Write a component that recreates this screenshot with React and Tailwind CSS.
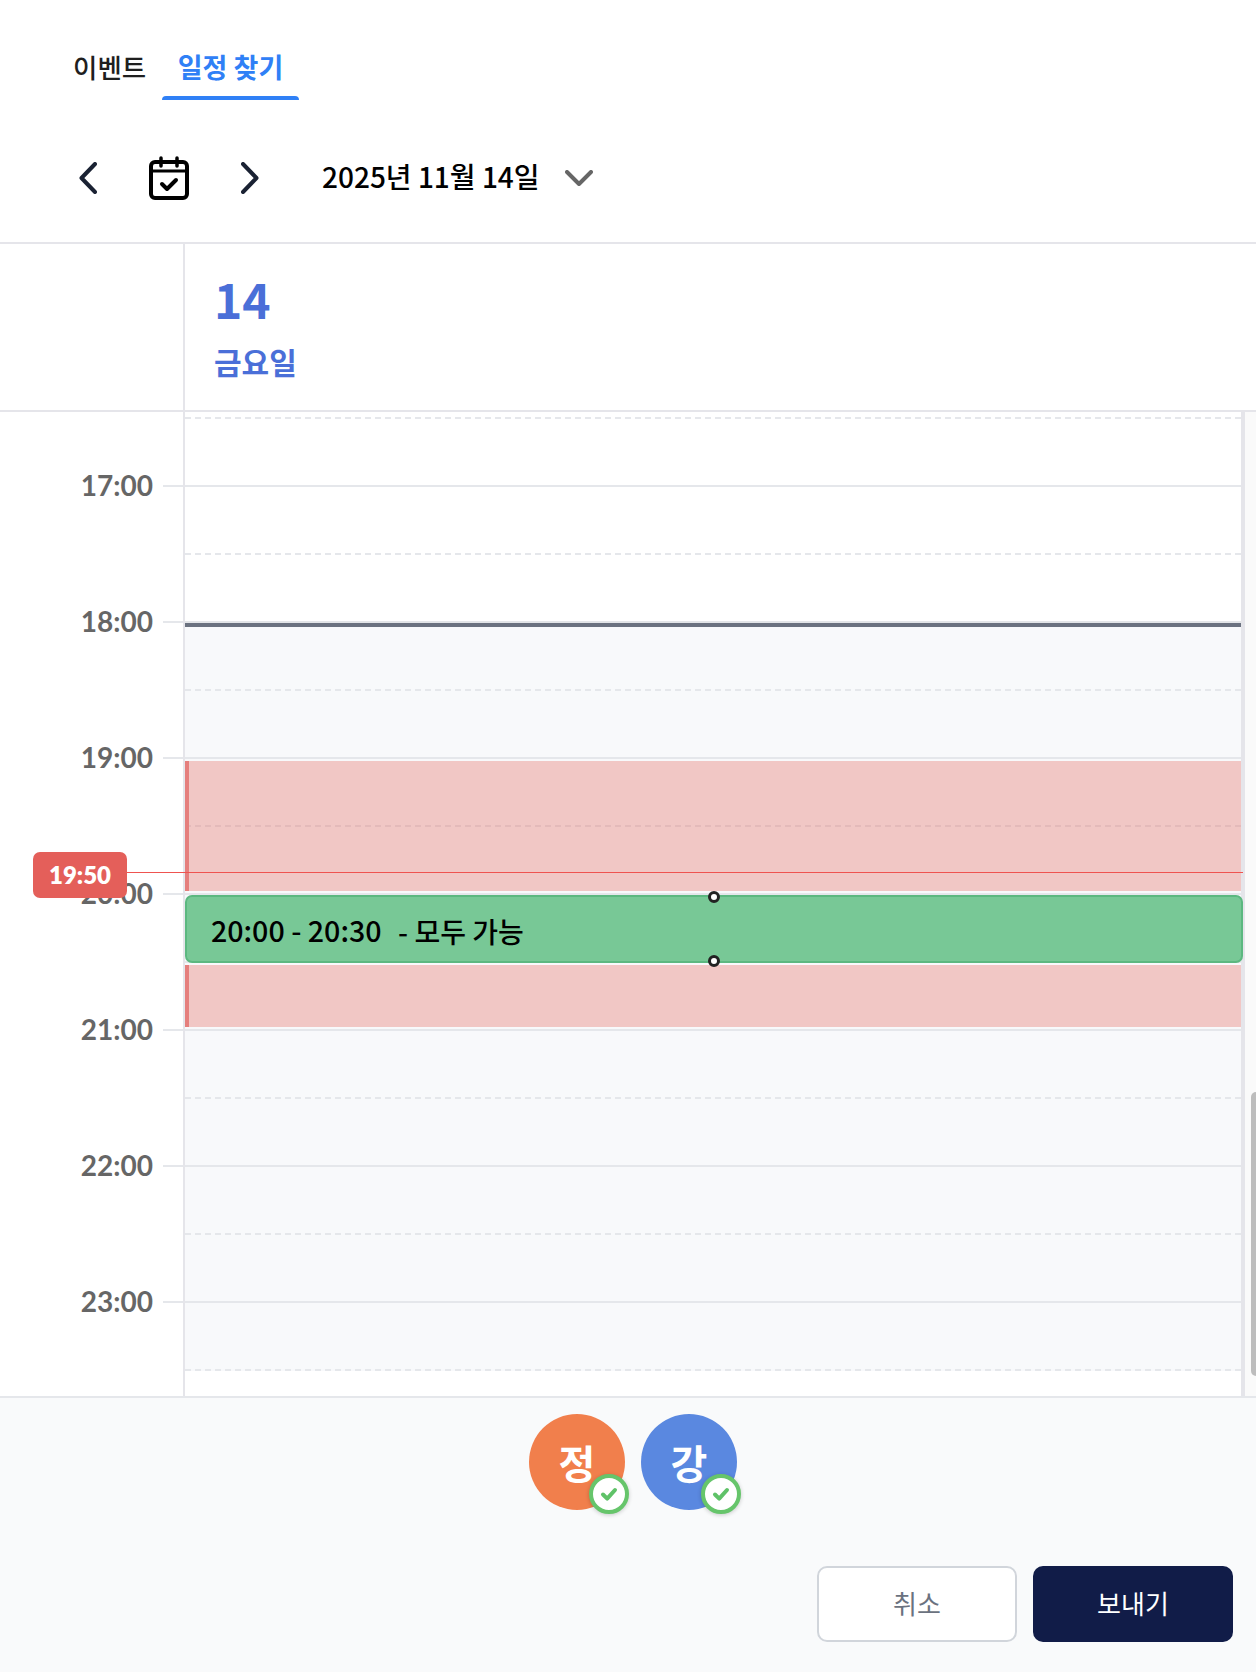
import React from "react";

const KR = "font-['Noto_Sans_CJK_KR',sans-serif]";
const hours = ["17:00", "18:00", "19:00", "20:00", "21:00", "22:00", "23:00"];

// half hour slots from the first dashed line down, 68px each
const slots = Array.from({ length: 14 }, (_, i) => ({ solid: i % 2 === 0 }));

function CalendarCheck() {
  return (
    <svg width="40" height="44" viewBox="0 0 40 44" fill="none" stroke="#000" strokeWidth="4" strokeLinecap="round" strokeLinejoin="round">
      <rect x="2" y="6" width="36" height="36" rx="4" />
      <path d="M2 15h36" strokeWidth="3" />
      <path d="M12 2v8M28 2v8" strokeWidth="3.5" />
      <path d="M13 28l5 5 9-9" />
    </svg>
  );
}

function Chevron({ d, w = 18, h = 32, color = "#1a2233" }) {
  return (
    <svg width={w} height={h} viewBox={`0 0 ${w} ${h}`} fill="none" stroke={color} strokeWidth="4" strokeLinecap="round" strokeLinejoin="round">
      <path d={d} />
    </svg>
  );
}

function Avatar({ name, color }) {
  return (
    <div className={`relative w-[96px] h-[96px] rounded-full flex items-center justify-center text-white text-[40px] font-bold ${color}`}>
      {name}
      <div className="absolute left-[60px] top-[60px] w-[40px] h-[40px] rounded-full bg-white border-4 border-[#66c56b] shadow-[0_1px_4px_rgba(0,0,0,0.2)] flex items-center justify-center">
        <svg width="20" height="20" viewBox="0 0 20 20" fill="none" stroke="#5fc268" strokeWidth="4" strokeLinecap="round" strokeLinejoin="round">
          <path d="M4 10.5l4.2 4.2L16 6" />
        </svg>
      </div>
    </div>
  );
}

export default function App() {
  return (
    <div className={`relative w-[1256px] h-[1672px] bg-white flex flex-col overflow-hidden ${KR}`}>
      <div className="flex items-end pl-[57px] h-[100px] shrink-0">
        <div className="w-[104px] pl-[16px] h-[64px] flex items-center text-[26.5px] font-medium leading-none text-[#1f1f1f] pb-[2px] whitespace-nowrap">이벤트</div>
        <div className="ml-px w-[137px] h-[64px] flex flex-col items-center whitespace-nowrap text-[27px] font-semibold leading-none text-[#2f80f6]">
          <div className="flex-1 flex items-center">일정 찾기</div>
          <div className="w-full h-[4px] rounded-t-[4px] bg-[#2f80f6]" />
        </div>
      </div>

      <div className="flex items-center pl-[79px] h-[144px] pt-[13px] shrink-0 border-b-2 border-[#e5e5ea]">
        <Chevron d="M16 2L2.5 16 16 30" />
        <div className="ml-[52px]"><CalendarCheck /></div>
        <div className="ml-[52px]"><Chevron d="M2 2l13.5 14L2 30" /></div>
        <div className="ml-[63px] mb-[3px] text-[28px] font-medium leading-none text-black whitespace-nowrap">2025년 11월 14일</div>
        <div className="ml-[25px] mt-[1px]"><Chevron d="M2 2l12 12L26 2" w={28} h={16} color="#666666" /></div>
      </div>

      <div className="flex h-[168px] shrink-0 border-b-2 border-[#e5e5ea]">
        <div className="w-[185px] border-r-2 border-[#e5e5ea] shrink-0" />
        <div className="pl-[29px] text-[#4a6fd8] font-bold">
          <div className="text-[48px] leading-none mt-[30px]">14</div>
          <div className="text-[30px] leading-none mt-[24px]">금요일</div>
        </div>
      </div>

      <div className="flex h-[984px] shrink-0 overflow-hidden">
        <div className="w-[185px] shrink-0 pt-[6px] border-r-2 border-[#e5e5ea] overflow-hidden">
          {hours.map((h) => (
            <div key={h} className="h-[136px] flex items-center justify-end">
              <span className="font-['Lato',sans-serif] font-bold text-[28px] leading-none text-[#666666] mr-[10px] mb-[2px]">{h}</span>
              <div className="w-[20px] h-[2px] bg-[#e5e7eb]" />
            </div>
          ))}
        </div>

        <div className="relative w-[1056px] shrink-0">
          <div className="h-[5px] border-b-2 border-dashed border-[#e5e7eb] box-content" />
          {slots.map((s, i) => (
            <div
              key={i}
              className={`h-[68px] border-b-2 border-[#e5e7eb] ${i >= 3 ? "bg-[#f8f9fb]" : "bg-white"} ${s.solid ? "border-solid" : "border-dashed"}`}
            />
          ))}

          {/* now boundary and the busy blocks */}
          <div className="absolute left-0 right-0 top-[209px] h-[6px] bg-[#6b7280] border-t-2 border-[#e3e5e8]" />
          <div className="absolute left-0 right-0 top-[349px] h-[130px] bg-[rgba(225,83,74,0.3)] border-l-4 border-[#e57f7d]" />
          <div className="absolute left-0 right-0 top-[553px] h-[62px] bg-[rgba(225,83,74,0.3)] border-l-4 border-[#e57f7d]" />
        </div>

        <div className="w-[4px] shrink-0 bg-[#e5e5ea]" />
        <div className="relative flex-1 bg-[#fafafa]">
          <div className="absolute right-0 top-[680px] w-[5px] h-[284px] rounded-l-[6px] bg-[#bdbdbd]" />
        </div>
      </div>

      <div className="flex-1 bg-[#f9fafb] border-t-2 border-[#e5e7eb] flex flex-col">
        <div className="flex justify-center gap-[16px] pt-[16px] pl-[10px]">
          <Avatar name="정" color="bg-[#f17f4c]" />
          <Avatar name="강" color="bg-[#5a88e0]" />
        </div>
        <div className="flex justify-end gap-[16px] mt-[56px] pr-[23px]">
          <button className="w-[200px] h-[76px] pb-[4px] rounded-[10px] bg-white border-2 border-[#d1d5db] text-[#6b7280] text-[26px]">취소</button>
          <button className="w-[200px] h-[76px] pb-[4px] rounded-[10px] bg-[#111c48] text-white text-[26px]">보내기</button>
        </div>
      </div>

      {/* overlays above the grid */}
      <div className="absolute left-[185px] top-[895px] w-[1058px] h-[68px] rounded-[7px] bg-[#78c896] border-2 border-[#5cb880] flex items-center pl-[24px] pt-[3px] text-[28px] text-black whitespace-pre font-medium">
        <span className="text-[28.6px] mr-[4px]">20:00 - 20:30</span>  - 모두 가능
        <div className="absolute left-[521px] top-[-6px] w-[12px] h-[12px] rounded-full bg-white border-[3px] border-[#222]" />
        <div className="absolute left-[521px] top-[58px] w-[12px] h-[12px] rounded-full bg-white border-[3px] border-[#222]" />
      </div>
      <div className="absolute left-[127px] top-[872px] w-[1116px] h-px bg-[#ef5350]" />
      <div className="absolute left-[33px] top-[852px] w-[94px] h-[46px] rounded-[7px] bg-[#e45f5a] flex items-center justify-center text-white font-['Lato',sans-serif] font-extrabold text-[24px] leading-none">19:50</div>
    </div>
  );
}
